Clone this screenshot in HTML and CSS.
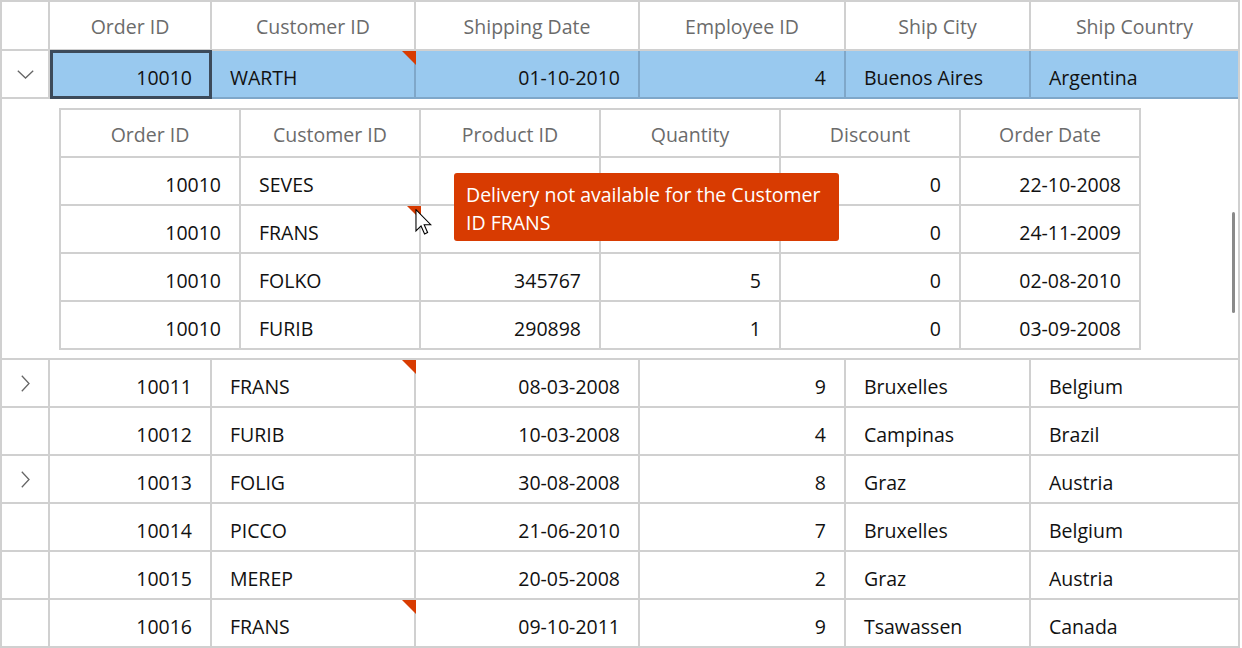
FILE: index.html
```html
<!DOCTYPE html>
<html>
<head>
<meta charset="utf-8">
<link rel="stylesheet" href="styles.css">
</head>
<body>
<div class="page">
  <div class="grid">
    <div class="row head">
      <div class="cell ind"></div>
      <div class="cell c">Order ID</div>
      <div class="cell c">Customer ID</div>
      <div class="cell c">Shipping Date</div>
      <div class="cell c">Employee ID</div>
      <div class="cell c">Ship City</div>
      <div class="cell c last">Ship Country</div>
    </div>
    <div class="row sel">
      <div class="cell ind"><svg class="chev-d" width="17" height="9" viewBox="0 0 17 9"><path d="M0.8 0.8 L8.5 8 L16.2 0.8" fill="none" stroke="#666" stroke-width="1.3"/></svg></div>
      <div class="cell r current">10010</div>
      <div class="cell err">WARTH</div>
      <div class="cell r">01-10-2010</div>
      <div class="cell r">4</div>
      <div class="cell">Buenos Aires</div>
      <div class="cell last">Argentina</div>
    </div>
    <div class="detail">
      <div class="sub">
        <div class="srow head">
          <div class="cell c">Order ID</div>
          <div class="cell c">Customer ID</div>
          <div class="cell c">Product ID</div>
          <div class="cell c">Quantity</div>
          <div class="cell c">Discount</div>
          <div class="cell c">Order Date</div>
        </div>
        <div class="srow">
          <div class="cell r">10010</div>
          <div class="cell">SEVES</div>
          <div class="cell r"></div>
          <div class="cell r"></div>
          <div class="cell r">0</div>
          <div class="cell r">22-10-2008</div>
        </div>
        <div class="srow">
          <div class="cell r">10010</div>
          <div class="cell err">FRANS</div>
          <div class="cell r"></div>
          <div class="cell r"></div>
          <div class="cell r">0</div>
          <div class="cell r">24-11-2009</div>
        </div>
        <div class="srow">
          <div class="cell r">10010</div>
          <div class="cell">FOLKO</div>
          <div class="cell r">345767</div>
          <div class="cell r">5</div>
          <div class="cell r">0</div>
          <div class="cell r">02-08-2010</div>
        </div>
        <div class="srow">
          <div class="cell r">10010</div>
          <div class="cell">FURIB</div>
          <div class="cell r">290898</div>
          <div class="cell r">1</div>
          <div class="cell r">0</div>
          <div class="cell r">03-09-2008</div>
        </div>
      </div>
    </div>
    <div class="row">
      <div class="cell ind"><svg class="chev-r" width="9" height="17" viewBox="0 0 9 17"><path d="M0.8 0.8 L8 8.5 L0.8 16.2" fill="none" stroke="#666" stroke-width="1.3"/></svg></div>
      <div class="cell r">10011</div>
      <div class="cell err">FRANS</div>
      <div class="cell r">08-03-2008</div>
      <div class="cell r">9</div>
      <div class="cell">Bruxelles</div>
      <div class="cell last">Belgium</div>
    </div>
    <div class="row">
      <div class="cell ind"></div>
      <div class="cell r">10012</div>
      <div class="cell">FURIB</div>
      <div class="cell r">10-03-2008</div>
      <div class="cell r">4</div>
      <div class="cell">Campinas</div>
      <div class="cell last">Brazil</div>
    </div>
    <div class="row">
      <div class="cell ind"><svg class="chev-r" width="9" height="17" viewBox="0 0 9 17"><path d="M0.8 0.8 L8 8.5 L0.8 16.2" fill="none" stroke="#666" stroke-width="1.3"/></svg></div>
      <div class="cell r">10013</div>
      <div class="cell">FOLIG</div>
      <div class="cell r">30-08-2008</div>
      <div class="cell r">8</div>
      <div class="cell">Graz</div>
      <div class="cell last">Austria</div>
    </div>
    <div class="row">
      <div class="cell ind"></div>
      <div class="cell r">10014</div>
      <div class="cell">PICCO</div>
      <div class="cell r">21-06-2010</div>
      <div class="cell r">7</div>
      <div class="cell">Bruxelles</div>
      <div class="cell last">Belgium</div>
    </div>
    <div class="row">
      <div class="cell ind"></div>
      <div class="cell r">10015</div>
      <div class="cell">MEREP</div>
      <div class="cell r">20-05-2008</div>
      <div class="cell r">2</div>
      <div class="cell">Graz</div>
      <div class="cell last">Austria</div>
    </div>
    <div class="row">
      <div class="cell ind"></div>
      <div class="cell r">10016</div>
      <div class="cell err">FRANS</div>
      <div class="cell r">09-10-2011</div>
      <div class="cell r">9</div>
      <div class="cell">Tsawassen</div>
      <div class="cell last">Canada</div>
    </div>
    <div class="scrollbar"></div>
  </div>
  <div class="tooltip">Delivery not available for the Customer<br>ID FRANS</div>
  <svg class="cursor" width="17" height="26" viewBox="0 0 12 19"><path d="M0.5 0.5 L0.5 16 L4.2 12.4 L6.8 18.2 L9 17.2 L6.5 11.5 L11.3 11.5 Z" fill="#fff" stroke="#000" stroke-width="0.8" stroke-linejoin="miter"/></svg>
</div>
</body>
</html>
```
FILE: styles.css
```css
* { box-sizing: border-box; }
html, body { margin: 0; padding: 0; background: #fff; }
body {
  font-family: "Segoe UI", "Open Sans", sans-serif;
  font-size: 19.5px;
  color: #111;
  width: 1242px;
  height: 648px;
  overflow: hidden;
}
.page { position: relative; width: 1242px; height: 648px; }
.grid {
  position: relative;
  width: 1240px;
  border-top: 2px solid #d0d0d0;
  border-left: 2px solid #d0d0d0;
  border-right: 2px solid #d0d0d0;
}
.row {
  display: grid;
  grid-template-columns: 48px 162px 204px 224px 206px 185px 207px;
  height: 48px;
}
.row.head { height: 49px; }
.cell {
  position: relative;
  display: flex;
  align-items: center;
  padding: 7px 18px 0 18px;
  border-right: 2px solid #d0d0d0;
  border-bottom: 2px solid #d0d0d0;
  white-space: nowrap;
  overflow: visible;
}
.cell.last { border-right: none; }
.cell.r { justify-content: flex-end; }
.cell.c { justify-content: center; color: #6b6b6b; padding: 2px 0 0 0; }
.cell.ind { justify-content: center; padding: 0; }
.sel .cell:not(.ind) {
  background: #99c9ef;
  border-right-color: #7fa7c9;
  border-bottom-color: #7fa7c9;
}
.sel .cell.last { border-right: none; }
.current::before {
  content: "";
  position: absolute;
  top: -1px;
  left: 0;
  right: -2px;
  bottom: -2px;
  border: 3px solid #3c4a5a;
}
.err::after {
  content: "";
  position: absolute;
  top: 0;
  right: -2px;
  width: 14px;
  height: 14px;
  background: #d83b01;
  clip-path: polygon(0 0, 100% 0, 100% 100%);
}
.detail {
  height: 261px;
  padding: 9px 0 0 57px;
  border-bottom: 2px solid #d0d0d0;
}
.sub {
  width: 1082px;
  border-top: 2px solid #d0d0d0;
  border-left: 2px solid #d0d0d0;
}
.srow {
  display: grid;
  grid-template-columns: repeat(6, 180px);
  height: 48px;
}
.scrollbar {
  position: absolute;
  left: 1230px;
  top: 210px;
  width: 3px;
  height: 101px;
  border-radius: 2px;
  background: #8a8a8a;
}
.tooltip {
  position: absolute;
  left: 454px;
  top: 173px;
  width: 385px;
  height: 68px;
  padding: 8px 12px 0 12px;
  background: #d83b01;
  color: #fff;
  border-radius: 3px;
  line-height: 28px;
  white-space: nowrap;
}
.cursor {
  position: absolute;
  left: 415px;
  top: 209px;
}
```
